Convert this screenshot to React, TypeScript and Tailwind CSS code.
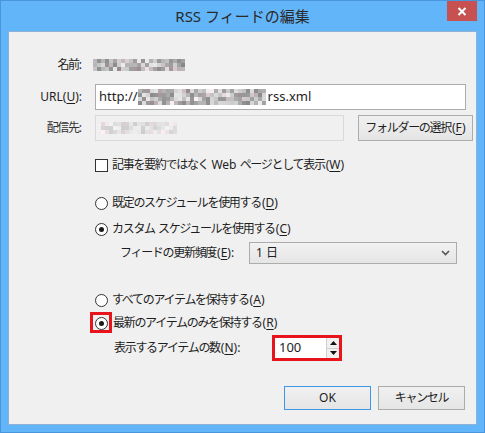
import React from "react";

function Mosaic({ cols, rows, seed, light }: { cols: number; rows: number; seed: number; light?: boolean }) {
  let s = seed;
  const rnd = () => {
    s = (s * 9301 + 49297) % 233280;
    return s / 233280;
  };
  const grid: string[][] = [];
  for (let r = 0; r < rows; r++) {
    const row: string[] = [];
    for (let c = 0; c < cols; c++) {
      const v = rnd();
      let g: number;
      if (light) g = Math.round(205 + v * 38);
      else g = Math.round(135 + v * 105);
      const tint = rnd() < 0.18 ? 12 : 0;
      const rr = Math.min(255, g + tint);
      const bb = Math.min(255, g + (tint ? 4 : 0));
      row.push(`rgb(${rr},${g},${bb})`);
    }
    grid.push(row);
  }
  return (
    <span className="inline-flex flex-col">
      {grid.map((row, i) => (
        <span key={i} className="flex">
          {row.map((c, j) => (
            <span key={j} className="block w-[4px] h-[4px]" style={{ backgroundColor: c }} />
          ))}
        </span>
      ))}
    </span>
  );
}

const Radio = ({ checked }: { checked?: boolean }) => (
  <span className="w-[13px] h-[13px] rounded-full border border-[#333] bg-white flex items-center justify-center shrink-0">
    {checked && <span className="w-[5px] h-[5px] rounded-full bg-[#1a1a1a]" />}
  </span>
);

const U = ({ children }: { children: React.ReactNode }) => <span className="underline underline-offset-2">{children}</span>;

const Mn = ({ k, colon }: { k: string; colon?: boolean }) => (
  <span className="tracking-normal ml-[1px]">
    (<U>{k}</U>){colon ? ":" : ""}
  </span>
);

export default function App() {
  return (
    <div className="w-[485px] h-[433px] bg-[#63b5fa] border border-[#4a96de] flex flex-col font-['Noto_Sans','Noto_Sans_CJK_JP',sans-serif] text-[12px] text-[#1e1e1e] overflow-hidden">
      <div className="relative h-[30px] shrink-0 flex items-center justify-center">
        <span className="text-[15px] text-[#2a2a2a] mt-[1px]">RSS フィードの編集</span>
        <div className="absolute right-[7px] top-0 w-[30px] h-[20px] bg-[#c75050] flex items-center justify-center">
          <svg width="10" height="9" viewBox="0 0 10 9">
            <path d="M1.5 1 L8.5 8 M8.5 1 L1.5 8" stroke="#fff" strokeWidth="2" />
          </svg>
        </div>
      </div>
      <div className="mx-[7px] h-[394px] bg-[#f0f0f0] border border-[#8db2d6] flex flex-col tracking-[-1.3px]">
        {/* name */}
        <div className="flex items-center h-[20px] mt-[23px]">
          <span className="w-[73px] text-right">
            名前<span className="tracking-normal">:</span>
          </span>
          <span className="ml-[11px] flex items-center">
            <Mosaic cols={23} rows={3} seed={7} />
          </span>
        </div>
        {/* url */}
        <div className="flex items-center h-[26px] mt-[9px]">
          <span className="w-[73px] text-right tracking-normal">
            URL(<U>U</U>):
          </span>
          <div className="ml-[13px] w-[371px] h-[26px] bg-white border border-[#acacac] flex items-center pl-[3px] text-[13px] tracking-normal">
            <span>http://</span>
            <Mosaic cols={32} rows={4} seed={31} />
            <span className="ml-[2px]">rss.xml</span>
          </div>
        </div>
        {/* 配信先 */}
        <div className="flex items-center h-[26px] mt-[5px]">
          <span className="w-[73px] text-right text-[#333]">
            配信先<span className="tracking-normal">:</span>
          </span>
          <div className="ml-[13px] w-[249px] h-[26px] bg-[#f0f0f0] border border-[#d9d9d9] flex items-center pl-[5px]">
            <Mosaic cols={19} rows={3} seed={53} light />
          </div>
          <button className="ml-[14px] w-[115px] h-[26px] border border-[#acacac] bg-gradient-to-b from-[#f0f0f0] to-[#e5e5e5] flex items-center justify-center text-[12px]">
            フォルダーの選択<Mn k="F" />
          </button>
        </div>
        {/* checkbox */}
        <div className="flex items-center h-[16px] mt-[16px] pl-[86px]">
          <span className="w-[13px] h-[13px] border border-[#333] bg-white shrink-0" />
          <span className="ml-[4px]">
            記事を要約ではなく<span className="tracking-normal"> Web </span>ページとして表示<Mn k="W" />
          </span>
        </div>
        {/* radio D */}
        <div className="flex items-center h-[16px] mt-[22px] pl-[86px]">
          <Radio />
          <span className="ml-[4px]">
            既定のスケジュールを使用する<Mn k="D" />
          </span>
        </div>
        {/* radio C */}
        <div className="flex items-center h-[16px] mt-[10px] pl-[86px]">
          <Radio checked />
          <span className="ml-[4px]">
            カスタム<span className="tracking-normal"> </span>スケジュールを使用する<Mn k="C" />
          </span>
        </div>
        {/* frequency */}
        <div className="flex items-center h-[22px] mt-[5px] pl-[111px]">
          <span className="w-[129px]">
            フィードの更新頻度<Mn k="E" colon />
          </span>
          <div className="w-[208px] h-[22px] border border-[#acacac] bg-gradient-to-b from-[#f2f2f2] to-[#e5e5e5] flex items-center justify-between pl-[6px] pr-[6px] tracking-normal">
            <span>1 日</span>
            <svg width="9" height="6" viewBox="0 0 9 6">
              <path d="M1 1 L4.5 4.5 L8 1" stroke="#555" strokeWidth="1.6" fill="none" />
            </svg>
          </div>
        </div>
        {/* radio A */}
        <div className="flex items-center h-[16px] mt-[28px] pl-[86px]">
          <Radio />
          <span className="ml-[4px]">
            すべてのアイテムを保持する<Mn k="A" />
          </span>
        </div>
        {/* radio R */}
        <div className="flex items-center h-[16px] mt-[7px] pl-[86px]">
          <span className="relative flex">
            <Radio checked />
            <span className="absolute left-[-5px] top-[-5px] w-[22px] h-[21px] border-[3px] border-[#e8141c]" />
          </span>
          <span className="ml-[5px]">
            最新のアイテムのみを保持する<Mn k="R" />
          </span>
        </div>
        {/* count */}
        <div className="flex items-center h-[26px] mt-[4px] pl-[105px]">
          <span className="w-[158px]">
            表示するアイテムの数<Mn k="N" colon />
          </span>
          <div className="w-[70px] h-[26px] border-[3px] border-[#e8141c] bg-white flex tracking-normal">
            <div className="flex-1 flex items-center pl-[4px] text-[13px]">100</div>
            <div className="w-[13px] flex flex-col border-l border-[#d0d0d0]">
              <div className="flex-1 flex items-center justify-center bg-[#f0f0f0] border-b border-[#d0d0d0]">
                <svg width="7" height="4" viewBox="0 0 7 4">
                  <path d="M0 4 L3.5 0 L7 4 Z" fill="#111" />
                </svg>
              </div>
              <div className="flex-1 flex items-center justify-center bg-[#f0f0f0]">
                <svg width="7" height="4" viewBox="0 0 7 4">
                  <path d="M0 0 L3.5 4 L7 0 Z" fill="#111" />
                </svg>
              </div>
            </div>
          </div>
        </div>
        {/* buttons */}
        <div className="flex justify-end gap-[7px] mt-[25px] pr-[11px]">
          <button className="w-[87px] h-[24px] border border-[#3c97e8] bg-gradient-to-b from-[#f0f0f0] to-[#e5e5e5] flex items-center justify-center tracking-normal">
            OK
          </button>
          <button className="w-[87px] h-[24px] border border-[#acacac] bg-gradient-to-b from-[#f0f0f0] to-[#e5e5e5] flex items-center justify-center">
            キャンセル
          </button>
        </div>
      </div>
    </div>
  );
}
